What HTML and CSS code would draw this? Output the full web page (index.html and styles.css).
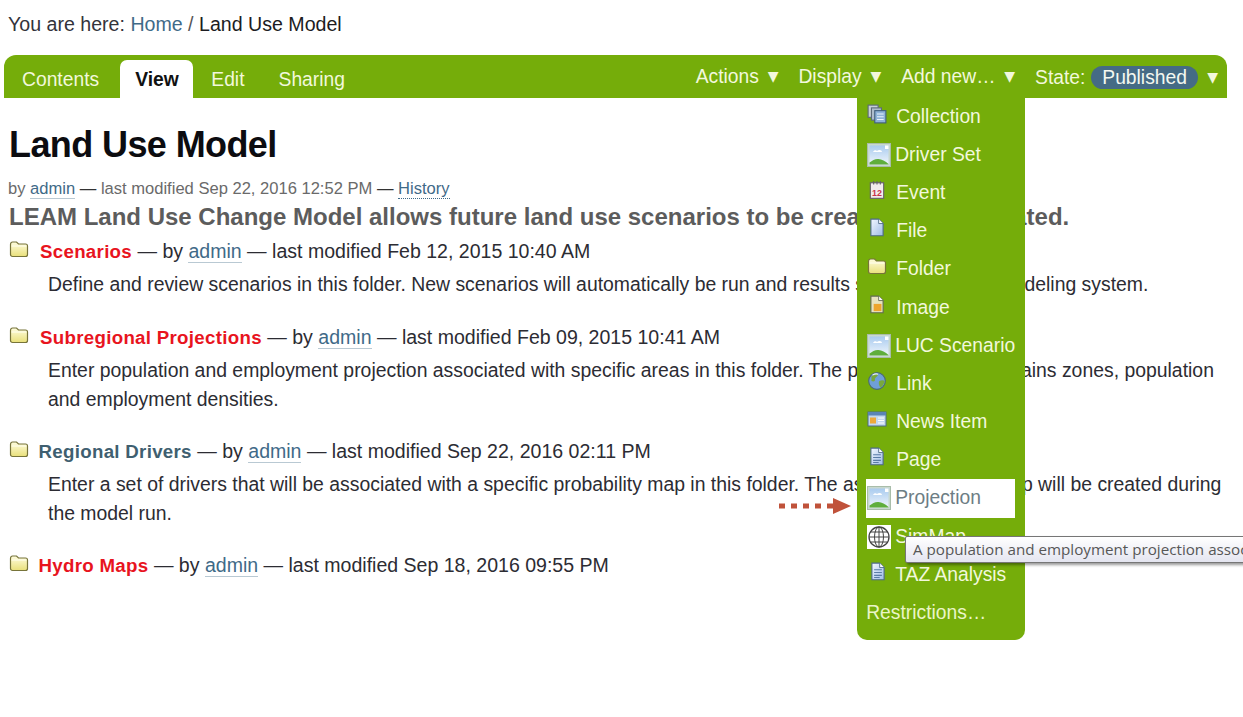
FILE: index.html
```html
<!DOCTYPE html>
<html lang="en">
<head>
<meta charset="utf-8">
<title>Land Use Model</title>
<link rel="stylesheet" href="styles.css">
</head>
<body>
<svg class="defs" width="0" height="0" aria-hidden="true">
  <defs>
    <linearGradient id="gFolder" x1="0" y1="0" x2="0" y2="1"><stop offset="0" stop-color="#fffde0"/><stop offset="1" stop-color="#e9e07a"/></linearGradient>
    <linearGradient id="gDoc" x1="0" y1="0" x2="1" y2="1"><stop offset="0" stop-color="#f4f8ff"/><stop offset="1" stop-color="#9dbbe6"/></linearGradient>
    <linearGradient id="gSky" x1="0" y1="0" x2="0" y2="1"><stop offset="0" stop-color="#a9cbef"/><stop offset="1" stop-color="#f0f6fc"/></linearGradient>
    <symbol id="folder" viewBox="0 0 20 18">
      <path d="M1.500 4.500C1.500 3 2.500 2 3.500 2h4l2 2h7c1.200 0 2 .8 2 2v8.500c0 1.200-.8 2-2 2h-13c-1.200 0-2-.8-2-2z" fill="url(#gFolder)" stroke="#77743a" stroke-width="1.200"/>
      <path d="M2.500 6h15" stroke="#fffff0" stroke-width="1"/>
    </symbol>
    <symbol id="doc" viewBox="0 0 16 18">
      <path d="M2.500 1h7l4 4v11h-11z" fill="url(#gDoc)" stroke="#4d6a86" stroke-width="1"/>
      <path d="M9.500 1v4h4" fill="#fff" stroke="#4d6a86" stroke-width=".8"/>
    </symbol>
    <symbol id="page" viewBox="0 0 16 18">
      <path d="M2.500 1h7l4 4v11h-11z" fill="url(#gDoc)" stroke="#4d6a86" stroke-width="1"/>
      <path d="M9.500 1v4h4" fill="#fff" stroke="#4d6a86" stroke-width=".8"/>
      <path d="M4.500 7h7M4.500 9.500h7M4.500 12h7M4.500 14h5" stroke="#5a7ca6" stroke-width="1"/>
    </symbol>
    <symbol id="picture" viewBox="0 0 24 24">
      <rect x=".5" y=".5" width="23" height="23" fill="#c8d8d0" stroke="#a9bdaa"/>
      <rect x="2.500" y="2.500" width="19" height="19" fill="url(#gSky)"/>
      <path d="M6 9c1-2 3-2 4-1 2-2 5-1 5 1z" fill="#fff"/>
      <path d="M2.500 21.500v-2c3-2 6-4 9-3.500 3 .5 7 2 10 5v.5z" fill="#5fae3c"/>
      <path d="M18 2.500h3.500V6H18z" fill="#fff"/>
    </symbol>
    <symbol id="collection" viewBox="0 0 18 18">
      <rect x="1" y="1" width="9" height="11" fill="#c7cfd8" stroke="#5d6b78"/>
      <rect x="4" y="3.500" width="9" height="11" fill="#aebccb" stroke="#5d6b78"/>
      <rect x="7" y="6" width="10" height="11" fill="#8fb3d9" stroke="#3f5d7c"/>
      <path d="M9 9h6M9 11.500h6M9 14h6" stroke="#e8f1fa" stroke-width="1"/>
    </symbol>
    <symbol id="event" viewBox="0 0 16 18">
      <rect x="2" y="2.500" width="12" height="14" fill="#f2ecec" stroke="#66606a"/>
      <path d="M5 1v3M8 1v3M11 1v3" stroke="#66606a" stroke-width="1"/>
      <text x="8" y="14" class="cal">12</text>
    </symbol>
    <symbol id="image" viewBox="0 0 16 18">
      <path d="M2.500 1h7l4 4v11h-11z" fill="#e7e3c0" stroke="#5f6a50" stroke-width="1"/>
      <path d="M9.500 1v4h4" fill="#fff" stroke="#5f6a50" stroke-width=".8"/>
      <rect x="5" y="8" width="7" height="6.500" fill="#eda52f"/>
    </symbol>
    <symbol id="link" viewBox="0 0 18 18">
      <circle cx="9" cy="9" r="7.500" fill="#6f9fd8" stroke="#4c6a70"/>
      <path d="M4 5c2-2 4-3 6-2 0 2-2 2-3 4 1 2-1 3-3 2zM11 9c2-1 4-1 5 0-1 3-2 5-4 6-1-2-2-4-1-6z" fill="#79a83c"/>
      <path d="M5 3.500c2-1 4-1 5-.5" stroke="#e8f2fb" stroke-width="1" fill="none"/>
    </symbol>
    <symbol id="news" viewBox="0 0 20 18">
      <rect x="1" y="2" width="18" height="14" fill="#c4d8ef" stroke="#4d6a86"/>
      <rect x="1" y="2" width="18" height="3.500" fill="#5b85b6"/>
      <rect x="3" y="7.500" width="6" height="6" fill="#eea93a"/>
      <path d="M11 8h6M11 10.500h6M11 13h6" stroke="#fdfdfd" stroke-width="1"/>
    </symbol>
    <symbol id="globe" viewBox="0 0 24 24">
      <rect width="24" height="24" fill="#fff"/>
      <circle cx="12" cy="12" r="10" fill="none" stroke="#444" stroke-width="1.300"/>
      <ellipse cx="12" cy="12" rx="4.500" ry="10" fill="none" stroke="#444"/>
      <path d="M12 2v20M2 12h20M3.500 7h17M3.500 17h17" stroke="#444" stroke-width="1" fill="none"/>
    </symbol>
  </defs>
</svg>

<div class="page">
  <p class="crumbs">You are here: <a href="#">Home</a> <span class="sep">/</span> <span class="here">Land Use Model</span></p>

  <nav class="bar">
    <ul class="tabs">
      <li class="tab">Contents</li>
      <li class="tab tab-on">View</li>
      <li class="tab tab-edit">Edit</li>
      <li class="tab">Sharing</li>
    </ul>
    <ul class="actions">
      <li class="action">Actions <span class="tri">▼</span></li>
      <li class="action">Display <span class="tri">▼</span></li>
      <li class="action action-add">Add new… <span class="tri">▼</span>
        <ul class="menu">
          <li class="item"><svg class="ico"><use href="#collection"/></svg>Collection</li>
          <li class="item item-pic"><svg class="pic"><use href="#picture"/></svg>Driver Set</li>
          <li class="item"><svg class="ico"><use href="#event"/></svg>Event</li>
          <li class="item"><svg class="ico"><use href="#doc"/></svg>File</li>
          <li class="item"><svg class="ico"><use href="#folder"/></svg>Folder</li>
          <li class="item"><svg class="ico"><use href="#image"/></svg>Image</li>
          <li class="item item-pic"><svg class="pic"><use href="#picture"/></svg>LUC Scenario</li>
          <li class="item"><svg class="ico"><use href="#link"/></svg>Link</li>
          <li class="item"><svg class="ico"><use href="#news"/></svg>News Item</li>
          <li class="item"><svg class="ico"><use href="#page"/></svg>Page</li>
          <li class="item item-pic item-hover"><svg class="pic"><use href="#picture"/></svg>Projection</li>
          <li class="item item-pic"><svg class="pic"><use href="#globe"/></svg>SimMap</li>
          <li class="item item-pic"><svg class="ico ico-taz"><use href="#page"/></svg>TAZ Analysis</li>
          <li class="item item-plain">Restrictions…</li>
        </ul>
      </li>
      <li class="action action-state">State: <span class="pill">Published</span> <span class="tri">▼</span></li>
    </ul>
  </nav>

  <main class="content">
    <h1 class="title">Land Use Model</h1>
    <p class="byline">by <a href="#">admin</a> <span class="dash">—</span> last modified Sep 22, 2016 12:52 PM <span class="dash">—</span> <a class="hist" href="#">History</a></p>
    <p class="lead">LEAM Land Use Change Model allows future land use scenarios to be created and evaluated.</p>

    <section class="entry">
      <p class="head"><svg class="folder"><use href="#folder"/></svg><a class="name red" href="#">Scenarios</a> — by <a href="#">admin</a> — last modified Feb 12, 2015 10:40 AM</p>
      <p class="desc">Define and review scenarios in this folder. New scenarios will automatically be run and results set in the LEAM modeling system.</p>
    </section>
    <section class="entry">
      <p class="head"><svg class="folder"><use href="#folder"/></svg><a class="name red" href="#">Subregional Projections</a> — by <a href="#">admin</a> — last modified Feb 09, 2015 10:41 AM</p>
      <p class="desc">Enter population and employment projection associated with specific areas in this folder. The projection layer contains zones, population and employment densities.</p>
    </section>
    <section class="entry">
      <p class="head head-tight"><svg class="folder"><use href="#folder"/></svg><a class="name slate" href="#">Regional Drivers</a> — by <a href="#">admin</a> — last modified Sep 22, 2016 02:11 PM</p>
      <p class="desc">Enter a set of drivers that will be associated with a specific probability map in this folder. The associated driver map will be created during the model run.</p>
    </section>
    <section class="entry">
      <p class="head head-tight"><svg class="folder"><use href="#folder"/></svg><a class="name red" href="#">Hydro Maps</a> — by <a href="#">admin</a> — last modified Sep 18, 2016 09:55 PM</p>
    </section>
  </main>

  <svg class="arrow" width="74" height="20" viewBox="0 0 74 20" aria-hidden="true">
    <path d="M0 10h54" stroke="#c0523a" stroke-width="5" stroke-dasharray="6 6"/>
    <path d="M54 2l18 8-18 8z" fill="#c0523a"/>
  </svg>
  <div class="tip">A population and employment projection associated with specific areas</div>
</div>
</body>
</html>
```

FILE: styles.css
```css
* { box-sizing: border-box; }
html, body { margin: 0; padding: 0; background: #fff; }
body { font-family: "Liberation Sans", Arial, sans-serif; color: #1c1c22; overflow: hidden; }
.defs { position: absolute; }
.cal { font: bold 8px "Liberation Sans", sans-serif; fill: #c8324a; text-anchor: middle; }
a { color: #3f6a88; text-decoration: none; }

.page { position: relative; width: 1243px; height: 717px; overflow: hidden; }

.crumbs { margin: 0; padding: 14px 0 0 8px; height: 55px; font-size: 19.600px; line-height: 21px; color: #33333b; }
.crumbs .sep { color: #555; }
.crumbs .here { color: #1c1c22; }

.bar { display: flex; justify-content: space-between; margin-left: 4px; width: 1223px; height: 43px; background: #75ad0a; border-radius: 12px 12px 0 0; }
.tabs, .actions, .menu { list-style: none; margin: 0; padding: 0; }
.tabs { display: flex; align-items: flex-end; height: 43px; }
.tab { height: 38px; padding: 8px 18px 7px; line-height: 24px; font-size: 19.300px; color: #f2f8dc; }
.tab-on { margin-left: 3px; padding: 8px 14.500px 7px 15px; background: #fff; color: #111; font-weight: bold; border-radius: 7px 7px 0 0; }
.tab-edit { padding-right: 16px; }

.actions { display: flex; height: 43px; padding-right: 9px; color: #f2f8dc; font-size: 19.300px; }
.action { position: relative; padding-top: 11px; line-height: 22px; margin-left: 20px; white-space: nowrap; }
.tri { margin-left: 3.400px; font-size: 14px; line-height: 14px; vertical-align: 2px; font-family: "DejaVu Sans", sans-serif; }
.pill { display: inline-block; padding: 0 11.500px; height: 23px; line-height: 23px; background: #456b85; border-radius: 12px; color: #f4f8f0; }

.menu { position: absolute; z-index: 2; left: -44px; top: 42px; width: 168px; height: 543px; padding: .5px 10px 0 9px; background: #75ad0a; border-radius: 0 0 10px 10px; }
.item { display: flex; align-items: center; height: 38.200px; color: #f2f8dc; font-size: 19.300px; }
.item-hover { background: #fff; color: #6d7d84; }
.item-plain { color: #eaf5c8; }
.ico { width: 20px; height: 20px; margin: -3px 9px 3px 1px; flex: none; }
.ico-taz { margin: -3px 8px 3px 3px; width: 18px; }
.pic { width: 24px; height: 24px; margin-left: 1px; margin-right: 4px; flex: none; }

.content { padding: 25px 0 0 9px; }
.title { margin: 0; font-size: 36px; line-height: 44px; letter-spacing: -.6px; color: #0c0c10; font-weight: bold; }
.byline { margin: 12px 0 0 -1px; font-size: 16.560px; line-height: 20px; color: #6a6a6a; }
.byline a { border-bottom: 1px solid #b9c9d3; }
.byline .hist { border-bottom: 1px dotted #3f6a88; }
.dash { color: #333; }
.lead { margin: 4px 0 0; font-size: 24px; line-height: 28px; font-weight: bold; color: #5c5c5c; white-space: nowrap; }

.entry { height: 114px; padding-top: 8px; }
.entry:nth-of-type(1) { height: 86px; }
.head { margin: 0; font-size: 19.550px; line-height: 24px; color: #2c2c33; white-space: nowrap; }
.head a:not(.name) { border-bottom: 1px solid #b9c9d3; }
.folder { width: 20px; height: 18px; margin-right: 11px; vertical-align: 0; }
.head-tight .folder { margin-right: 9.500px; }
.name { font-size: 18.700px; font-weight: bold; letter-spacing: .3px; }
.red { color: #e8141e; }
.slate { color: #3f5f70; }
.desc { margin: 6px 0 0 39px; width: 1180px; font-size: 19.400px; line-height: 28.500px; color: #2c2c33; }

.arrow { position: absolute; z-index: 3; left: 779px; top: 496px; }
.tip { position: absolute; z-index: 4; left: 905px; top: 536px; width: 420px; height: 27px; padding: 0 7px; background: linear-gradient(#fff, #e4e5f0); border: 1px solid #767676; border-radius: 2px; box-shadow: 2px 2px 3px rgba(0,0,0,.4); font-family: "Open Sans", "Noto Sans", sans-serif; font-size: 15.200px; line-height: 25px; color: #575757; white-space: nowrap; }
```
